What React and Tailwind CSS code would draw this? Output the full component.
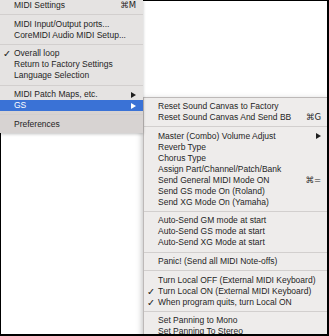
const font = "font-['Liberation_Sans',Arial,sans-serif]"

function Arrow({ white }) {
  return (
    <svg width="5" height="6" viewBox="0 0 5 6" className="shrink-0">
      <path d="M0 0 L5 3 L0 6 Z" fill={white ? '#ffffff' : '#1e1e1e'} />
    </svg>
  )
}

function Sep() {
  return (
    <div className="h-[7.7px] flex items-center">
      <div className="h-px w-full bg-[#d2cfce]" />
    </div>
  )
}

function Item({ label, check, shortcut, arrow, active }) {
  return (
    <div
      className={
        'h-[11px] flex items-center pr-[7px] ' +
        (active ? 'bg-[#3a72d6] text-white' : 'text-[#1f1f1f]')
      }
    >
      <span className="w-[14px] shrink-0 pl-[3px] text-[9.5px] leading-none font-bold font-['DejaVu_Sans',sans-serif]">
        {check ? '✓' : ''}
      </span>
      <span className="whitespace-nowrap">{label}</span>
      {shortcut && (
        <span className="ml-auto whitespace-nowrap font-['DejaVu_Sans',sans-serif] text-[8.5px]">
          {shortcut}
        </span>
      )}
      {arrow && (
        <span className="ml-auto">
          <Arrow white={active} />
        </span>
      )}
    </div>
  )
}

export default function App() {
  return (
    <div className={`relative w-[329px] h-[336px] overflow-hidden bg-white text-[8.5px] leading-[11px] ${font}`}>
      {/* GS submenu */}
      <div className="absolute left-[143px] top-[97px] z-10 w-[186px] h-[260px] pt-[3px] bg-[#eeeceb] border border-[#bdb9b8] shadow-[-1px_2px_6px_rgba(0,0,0,0.25)]">
        <Item label="Reset Sound Canvas to Factory" />
        <Item label="Reset Sound Canvas And Send BB" shortcut="⌘G" />
        <Sep />
        <Item label="Master (Combo) Volume Adjust" arrow />
        <Item label="Reverb Type" />
        <Item label="Chorus Type" />
        <Item label="Assign Part/Channel/Patch/Bank" />
        <Item label="Send General MIDI Mode ON" shortcut="⌘=" />
        <Item label="Send GS mode On (Roland)" />
        <Item label="Send XG Mode On (Yamaha)" />
        <Sep />
        <Item label="Auto-Send GM mode at start" />
        <Item label="Auto-Send GS mode at start" />
        <Item label="Auto-Send XG Mode at start" />
        <Sep />
        <Item label="Panic! (Send all MIDI Note-offs)" />
        <Sep />
        <Item label="Turn Local OFF (External MIDI Keyboard)" />
        <Item label="Turn Local ON (External MIDI Keyboard)" check />
        <Item label="When program quits, turn Local ON" check />
        <Sep />
        <Item label="Set Panning to Mono" />
        <Item label="Set Panning To Stereo" />
      </div>

      {/* screenshot frame */}
      <div className="absolute inset-0 z-20 border-t border-l border-r-2 border-b-2 border-black pointer-events-none" />

      {/* main menu */}
      <div className="absolute left-0 top-0 z-30 w-[143px] bg-[#e5e3e2] shadow-[0_1px_3px_rgba(0,0,0,0.25)]">
        <Item label="MIDI Settings" shortcut="⌘M" />
        <Sep />
        <Item label="MIDI Input/Output ports..." />
        <Item label="CoreMIDI Audio MIDI Setup..." />
        <Sep />
        <Item label="Overall loop" check />
        <Item label="Return to Factory Settings" />
        <Item label="Language Selection" />
        <Sep />
        <Item label="MIDI Patch Maps, etc." arrow />
        <Item label="GS" arrow active />
        <div className="bg-[#d7d3d2] pb-[3px]">
          <Sep />
          <Item label="Preferences" />
        </div>
      </div>
    </div>
  )
}
